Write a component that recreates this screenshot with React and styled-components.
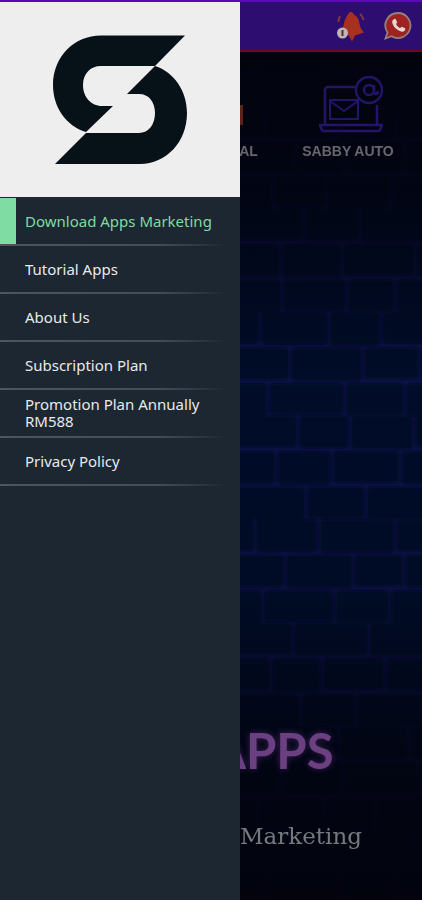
import styled, { createGlobalStyle } from 'styled-components'

const GlobalStyle = createGlobalStyle`
  html, body {
    margin: 0;
    padding: 0;
    background: #03030c;
  }
  * { box-sizing: border-box; }
`

const menu = [
  'Download Apps Marketing',
  'Tutorial Apps',
  'About Us',
  'Subscription Plan',
  'Promotion Plan Annually RM588',
  'Privacy Policy',
]

// brick rows for the wall, offsets vary a little so it does not look like a grid
const bricks = []
for (let row = 0; row < 26; row++) {
  const y = row * 34.5 + (row % 3)
  let x = row % 2 ? -34 : -8
  let i = row * 7
  while (x < 190) {
    const w = 46 + ((i * 13) % 29)
    bricks.push({ x, y, w, h: 31 + (i % 3), key: `${row}-${i}` })
    x += w + 2.5
    i++
  }
}

const App = () => {
  return (
    <Screen>
      <GlobalStyle />
      <TopStrip />
      <Body>
        <Drawer>
          <LogoPanel>
            <svg width="240" height="195" viewBox="0 2 240 195">
              <path
                fill="#061217"
                d="M185 35.500L155 66H101C90 66 83 74 83 85C83 97 91 106 102 106H113L86 132C66 126 53 107 53 85C53 57 74 35.500 101 35.500Z"
              />
              <path
                fill="#061217"
                d="M55 164L86 133H139C149 133 155 124 155 113C155 102 149 94 139 94H127L155 66C174 72 187 91 187 113C187 142 166 164 140 164Z"
              />
            </svg>
          </LogoPanel>
          <Menu>
            {menu.map((label, i) => (
              <MenuItem key={label} $active={i === 0}>
                <MenuLabel $active={i === 0}>{label}</MenuLabel>
              </MenuItem>
            ))}
          </Menu>
        </Drawer>

        <Behind>
          <Wall width="182" height="898" viewBox="0 0 182 898">
            <defs>
              <linearGradient id="wallFade" x1="0" y1="0" x2="0" y2="1">
                <stop offset="0" stopColor="#02020a" stopOpacity="0.95" />
                <stop offset="0.2" stopColor="#02020a" stopOpacity="0.75" />
                <stop offset="0.42" stopColor="#02020a" stopOpacity="0.05" />
                <stop offset="0.66" stopColor="#02020a" stopOpacity="0.15" />
                <stop offset="0.85" stopColor="#02020a" stopOpacity="0.75" />
                <stop offset="1" stopColor="#02020a" stopOpacity="0.9" />
              </linearGradient>
              <filter id="soft">
                <feGaussianBlur stdDeviation="1.1" />
              </filter>
            </defs>
            <rect width="182" height="898" fill="#0b1448" />
            <g filter="url(#soft)" fill="#060a2a">
              {bricks.map((b) => (
                <rect key={b.key} x={b.x} y={b.y} width={b.w} height={b.h} rx="4" />
              ))}
            </g>
            <rect width="182" height="898" fill="url(#wallFade)" />
          </Wall>

          <Header>
            <BellIcon width="34" height="36" viewBox="0 0 34 36">
              <path d="M17 3c1.500 0 2.500 1 2.500 2.500 4 1.500 5.500 5 6 9 .5 4 2 6.500 4.500 9l-9 3-3 6-3-6-9-2c2-3 3-6 4-10 .7-5 4-9 5-10.500C15 4 15.500 3 17 3z" fill="#a8301f" />
              <path d="M26 5c2 1.500 3 3.500 3.500 6M6 7c-1 2-1.500 4-1.500 6" fill="none" stroke="#8a3a3a" strokeWidth="1.800" />
              <circle cx="8.500" cy="24" r="5.500" fill="#bdb6b4" />
              <rect x="7.500" y="21" width="2" height="6" fill="#5a2a3a" />
            </BellIcon>
            <BlurredIcon width="30" height="30" viewBox="0 0 30 30">
              <path d="M15 2a12.500 12.500 0 1 1-6.500 23.200L2.500 27.500l2-6A12.500 12.500 0 0 1 15 2z" fill="#9e2222" stroke="#94807c" strokeWidth="1.800" />
              <path d="M10.500 8.500c1-1 2-.8 2.500.2l1 2c.3.7 0 1.200-.6 1.800-.4.400-.3.800 0 1.300.7 1.200 1.700 2.200 3 2.900.5.300.9.300 1.300-.1.600-.6 1.100-.9 1.800-.6l2 1c1 .5 1.100 1.500.2 2.500-1.500 1.600-3.500 1.500-6 .1-3.200-1.800-5.300-4.200-6.200-7-.6-1.800-.3-3 1-4.100z" fill="#e4d8d6" />
            </BlurredIcon>
          </Header>

          <Shortcuts>
            <Shortcut $width="17px">
              <RedEdge />
              <ShortcutLabel>AL</ShortcutLabel>
            </Shortcut>
            <Shortcut $width="92px">
              <MailIcon width="64" height="60" viewBox="0 0 64 60" fill="none" stroke="#241468" strokeWidth="2.500">
                <path d="M38 12H9a3 3 0 0 0-3 3v34M58 30v19" />
                <path d="M1 50h62l-1.500 4a3 3 0 0 1-3 2H5.500a3 3 0 0 1-3-2z" />
                <circle cx="50" cy="15" r="13" />
                <circle cx="50" cy="15" r="5" />
                <path d="M55 10v7c0 3 4 3 4-1" />
                <rect x="11" y="25" width="28" height="19" strokeWidth="2" />
                <path d="M11 26l14 10 14-10" strokeWidth="2" />
              </MailIcon>
              <ShortcutLabel>SABBY AUTO</ShortcutLabel>
            </Shortcut>
          </Shortcuts>

          <Bottom>
            <AppsTitle>APPS</AppsTitle>
            <Subtitle>Marketing</Subtitle>
          </Bottom>
        </Behind>
      </Body>
    </Screen>
  )
}

const Screen = styled.main`
  width: 422px;
  height: 900px;
  display: flex;
  flex-direction: column;
  overflow: hidden;
`

const TopStrip = styled.div`
  height: 2px;
  flex: none;
  background: #5a0cb4;
`

const Body = styled.div`
  flex: 1;
  display: grid;
  grid-template-columns: 240px 182px;
  min-height: 0;
`

const Drawer = styled.aside`
  display: flex;
  flex-direction: column;
  background: #1c2731;
`

const LogoPanel = styled.div`
  height: 195px;
  flex: none;
  background: #eeeeee;
  svg {
    display: block;
  }
`

const Menu = styled.nav`
  display: flex;
  flex-direction: column;
  padding-top: 1px;
`

const MenuItem = styled.div`
  position: relative;
  height: 48px;
  display: flex;
  align-items: center;
  padding: 0 20px 2px 25px;
  &::before {
    content: '';
    position: absolute;
    left: 0;
    top: 0;
    bottom: 1px;
    width: 16px;
    background: ${(p) => (p.$active ? '#7fdca3' : 'transparent')};
  }
  &::after {
    content: '';
    position: absolute;
    left: 0;
    right: 12px;
    bottom: 0;
    height: 2px;
    background: linear-gradient(90deg, #4c5660 0%, #434d57 70%, rgba(67, 77, 87, 0) 100%);
  }
`

const MenuLabel = styled.span`
  font-family: 'Noto Sans', sans-serif;
  font-size: 15px;
  line-height: 17px;
  color: ${(p) => (p.$active ? '#7fdca3' : '#e8eaec')};
`

const Behind = styled.div`
  position: relative;
  display: flex;
  flex-direction: column;
  overflow: hidden;
  background: #03030c;
`

const Wall = styled.svg`
  position: absolute;
  left: 0;
  top: 0;
`

const BlurredIcon = styled.svg`
  display: block;
  filter: blur(0.6px);
`

const BellIcon = styled(BlurredIcon)`
  margin-top: 1px;
`

const MailIcon = styled(BlurredIcon)`
  margin-left: 6px;
`

const Header = styled.header`
  position: relative;
  height: 50px;
  flex: none;
  display: flex;
  align-items: center;
  justify-content: flex-end;
  gap: 15px;
  padding: 0 9px 0 0;
  background: #2d0e70;
  border-bottom: 2px solid #6a0a14;
`

const Shortcuts = styled.section`
  position: relative;
  display: flex;
  justify-content: space-between;
  padding: 21px 28px 0 0;
`

const Shortcut = styled.div`
  position: relative;
  width: ${(p) => p.$width};
  height: 86px;
  display: flex;
  flex-direction: column;
  align-items: center;
  justify-content: flex-end;
  gap: 8px;
`

const RedEdge = styled.div`
  position: absolute;
  left: 0;
  top: 32px;
  width: 3px;
  height: 20px;
  background: #5e2018;
`

const ShortcutLabel = styled.span`
  font-family: 'Liberation Sans', sans-serif;
  font-size: 14px;
  font-weight: 700;
  line-height: 16px;
  white-space: nowrap;
  color: #66676d;
  filter: blur(0.4px);
`

const Bottom = styled.section`
  position: relative;
  margin-top: auto;
  display: flex;
  flex-direction: column;
  padding: 0 0 48px 0;
`

const AppsTitle = styled.h2`
  margin: 0 0 45px -28px;
  font-family: 'Lato', sans-serif;
  font-size: 49px;
  font-weight: 700;
  line-height: 50px;
  color: #6a4080;
  text-shadow: 0 0 6px rgba(120, 60, 150, 0.5);
  filter: blur(0.5px);
`

const Subtitle = styled.p`
  margin: 0;
  font-family: 'DejaVu Serif', serif;
  font-size: 23px;
  line-height: 32px;
  color: #737b7f;
  filter: blur(0.3px);
`

export default App
